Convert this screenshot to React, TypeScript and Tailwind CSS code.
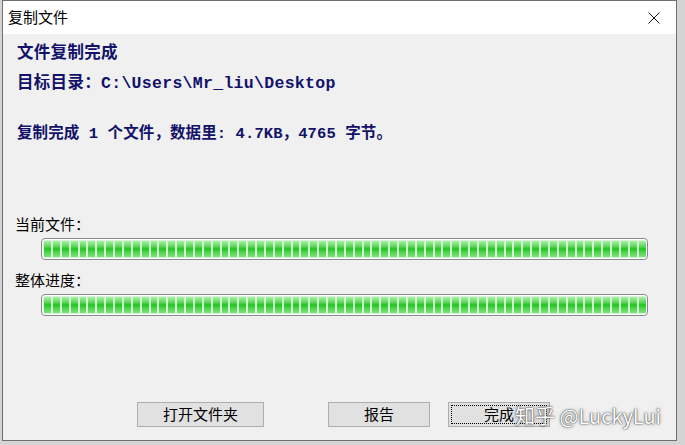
const segs = Array.from({ length: 68 }, (_, i) => i);

const ProgressBar = () => (
  <div className="ml-[38px] mr-[28px] h-[22px] rounded-[4px] border border-[#8a8a8a] bg-white p-px">
    <div className="flex h-full gap-[2px] rounded-[3px] bg-[#d6f5d6] p-px">
      {segs.map((i) => (
        <div
          key={i}
          className="h-full flex-1 bg-linear-to-b from-[#a8f0a8] via-[#16c916] to-[#7ee07e]"
        />
      ))}
    </div>
  </div>
);

const Button = ({ label, focused }: { label: string; focused?: boolean }) => (
  <div className="flex h-[25px] w-[102px] items-center justify-center border border-[#adadad] bg-[#e1e1e1] p-[2px] text-[15px] text-black">
    <div
      className={`flex h-full w-full items-center justify-center ${
        focused ? "border border-dotted border-black" : ""
      }`}
    >
      {label}
    </div>
  </div>
);

export default function App() {
  const mono = {
    fontFamily: '"Liberation Mono", "Noto Sans CJK SC", monospace',
  };
  return (
    <div
      className="relative h-[445px] w-[685px] overflow-hidden bg-[#d4d4d4]"
      style={{ fontFamily: '"Noto Sans CJK SC", "Noto Sans", sans-serif' }}
    >
      <div className="ml-[2px] flex h-[441px] w-[675px] flex-col border border-[#6f6f6f] bg-[#f0f0f0]">
        {/* title bar */}
        <div className="flex h-[33px] shrink-0 items-center justify-between bg-white pl-[5px] pr-[16px]">
          <span className="text-[15px] text-black">复制文件</span>
          <svg width="12" height="12" viewBox="0 0 12 12">
            <path d="M0.5 0.5 L11.5 11.5 M11.5 0.5 L0.5 11.5" stroke="#111" strokeWidth="1" />
          </svg>
        </div>

        <div className="flex flex-1 flex-col text-[#12126a]" style={mono}>
          <div className="ml-[14px] mt-[10px] h-[20px] text-[16.5px] font-bold leading-[20px] tracking-[0.3px]">
            文件复制完成
          </div>
          <div className="ml-[14px] mt-[10px] h-[20px] text-[16.5px] font-bold leading-[20px] tracking-[0.3px]">
            目标目录：C:\Users\Mr_liu\Desktop
          </div>
          <div className="ml-[14px] mt-[30px] h-[20px] text-[15.5px] font-bold leading-[20px] tracking-[0.1px]">
            复制完成 1 个文件，数据里: 4.7KB，4765 字节。
          </div>

          <div
            className="ml-[12px] mt-[70px] h-[20px] text-[15px] leading-[20px] text-black"
            style={{ fontFamily: '"Noto Sans CJK SC", sans-serif' }}
          >
            当前文件：
          </div>
          <div className="mt-[4px]">
            <ProgressBar />
          </div>
          <div
            className="ml-[12px] mt-[10px] h-[20px] text-[15px] leading-[20px] text-black"
            style={{ fontFamily: '"Noto Sans CJK SC", sans-serif' }}
          >
            整体进度：
          </div>
          <div className="mt-[4px]">
            <ProgressBar />
          </div>

          <div
            className="mt-[86px] flex items-center pl-[134px]"
            style={{ fontFamily: '"Noto Sans CJK SC", sans-serif' }}
          >
            <div className="w-[127px]">
              <div className="flex h-[25px] w-[127px] items-center justify-center border border-[#adadad] bg-[#e1e1e1] text-[15px] text-black">
                打开文件夹
              </div>
            </div>
            <div className="ml-[64px]">
              <Button label="报告" />
            </div>
            <div className="ml-[18px]">
              <Button label="完成" focused />
            </div>
          </div>
        </div>
      </div>

      {/* watermark */}
      <div
        className="absolute left-[515px] top-[401px] text-[20px] text-white [text-shadow:0_0_1px_rgba(0,0,0,0.8),0_0_2px_rgba(0,0,0,0.5),0_0_4px_rgba(0,0,0,0.25)]"
        style={{ fontFamily: '"Noto Sans CJK SC", "Open Sans", sans-serif' }}
      >
        知乎 @LuckyLui
      </div>
    </div>
  );
}
